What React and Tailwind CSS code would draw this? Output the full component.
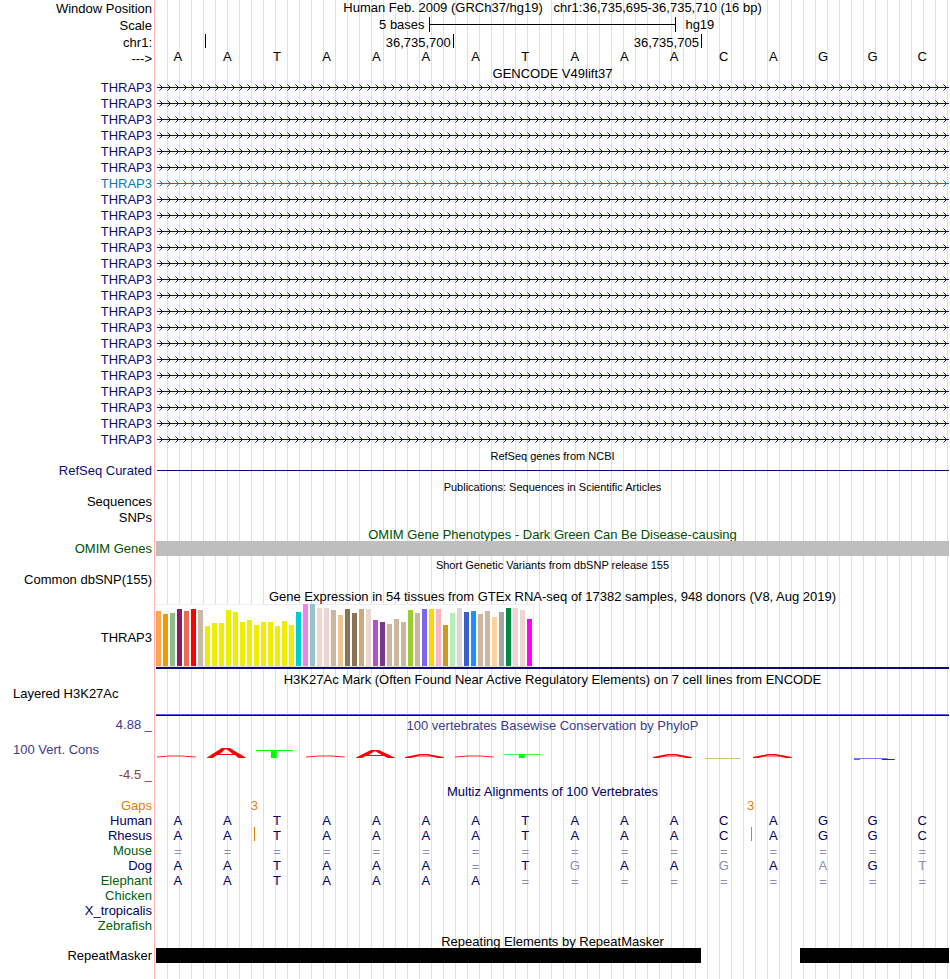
import React from "react";

const TRACK_BG =
  "bg-[linear-gradient(to_right,transparent_11px,#dcdcff_11px)] bg-[length:12px_100%]";

function Row({ label, labelClass = "text-black leading-4", height = "h-4", children }) {
  return (
    <div className={`flex ${height}`}>
      <div
        className={`w-[155px] shrink-0 border-r border-[#ffb4b4] pr-[2px] text-right text-[13px] ${labelClass}`}
      >
        {label}
      </div>
      <div className={`ml-px min-w-0 flex-1 ${TRACK_BG}`}>{children}</div>
    </div>
  );
}

function Title({ children, small = false, color = "text-black", leading = "leading-[17px]" }) {
  return (
    <h2 className={`text-center ${small ? "text-[11px]" : "text-[13px]"} ${leading} ${color}`}>
      {children}
    </h2>
  );
}

function Bases({ sequence, faint = "", color = "text-[#000064]", leading = "leading-[15px]" }) {
  return (
    <div className="-ml-[3px] mr-[2px] grid grid-cols-16 text-center text-[13px]">
      {sequence.split("").map((base, i) => (
        <span
          key={i}
          className={
            base === "="
              ? "text-[#8c8cb8] leading-[17px]"
              : `${leading} ${faint[i] === "x" ? "text-[#8c8cb8]" : color}`
          }
        >
          {base}
        </span>
      ))}
    </div>
  );
}

function GeneModel({ id, color }) {
  return (
    <svg className="block h-4 w-full" shapeRendering="crispEdges" aria-hidden="true">
      <defs>
        <pattern id={id} x="1" y="0" width="8" height="16" patternUnits="userSpaceOnUse">
          <g fill={color}>
            <rect x="0" y="7" width="8" height="1" />
            <rect x="4" y="6" width="1" height="1" />
            <rect x="4" y="8" width="1" height="1" />
            <rect x="3" y="5" width="1" height="1" />
            <rect x="3" y="9" width="1" height="1" />
            <rect x="2" y="4" width="1" height="1" opacity="0.5" />
            <rect x="2" y="10" width="1" height="1" opacity="0.5" />
          </g>
        </pattern>
      </defs>
      <rect x="1" y="0" width="100%" height="16" fill={`url(#${id})`} />
    </svg>
  );
}

const TISSUES = [
  [55, "#ffa54f"], [52, "#ee9a00"], [53, "#8fbc8f"], [57, "#8b1c62"], [55, "#ee6a50"],
  [57, "#ff0000"], [56, "#cdb79e"], [40, "#eeee00"], [43, "#eeee00"], [43, "#eeee00"],
  [56, "#eeee00"], [54, "#eeee00"], [44, "#eeee00"], [46, "#eeee00"], [41, "#eeee00"],
  [44, "#eeee00"], [44, "#eeee00"], [40, "#eeee00"], [45, "#eeee00"], [41, "#eeee00"],
  [54, "#00cdcd"], [62, "#ee82ee"], [62, "#9ac0cd"], [58, "#eed5d2"], [58, "#eed5d2"],
  [56, "#cdb79e"], [51, "#eec591"], [57, "#8b7355"], [53, "#8b7355"], [57, "#cdaa7d"],
  [57, "#eed5d2"], [46, "#b452cd"], [44, "#7a378b"], [42, "#cdb79e"], [47, "#cdb79e"],
  [44, "#cdb79e"], [56, "#9acd32"], [53, "#cdb79e"], [57, "#7a67ee"], [57, "#ffd700"],
  [57, "#ffb6c1"], [41, "#cd9b1d"], [53, "#b4eeb4"], [58, "#d9d9d9"], [54, "#3a5fcd"],
  [55, "#1e90ff"], [52, "#cdb79e"], [55, "#cdb79e"], [49, "#ffd39b"], [54, "#a6a6a6"],
  [58, "#008b45"], [58, "#eed5d2"], [56, "#eed5d2"], [47, "#ff00ff"],
];

const PEAK_FLAT = (
  <path
    d="M4 24.4 V23.6 L17 22.4 H29 L43 23.6 V24.4 L29 23.5 H17Z"
    fill="#ff0000"
    opacity="0.85"
  />
);
const PEAK_LOW = (
  <g fill="#ff0000">
    <path d="M4 25 V24 L19 21 H27 L43 24 V25 H37 L27 22.4 H19 L10 25Z" />
    <rect x="14" y="23" width="19" height="1" opacity="0.45" />
  </g>
);

const CONSERVATION = [
  PEAK_FLAT,
  <path key="1" fillRule="evenodd" fill="#ff0000" d="M4 25 V24.4 L19 15 H27 L43 24.4 V25 H36 L32 22 H14 L10 25Z M17 21 H30 L24 16.5 H22Z" />,
  <g key="2" fill="#00ff00">
    <rect x="4" y="17" width="37" height="1" />
    <rect x="19" y="17" width="6" height="8" />
  </g>,
  PEAK_FLAT,
  <path key="4" fillRule="evenodd" fill="#ff0000" d="M4 25 V24.4 L19 17 H27 L43 24.4 V25 H36 L32 23 H14 L10 25Z M17 22 H30 L24 18.5 H22Z" />,
  PEAK_LOW,
  PEAK_FLAT,
  <g key="7" fill="#00ff00">
    <rect x="4" y="21" width="37" height="1" opacity="0.7" />
    <rect x="19" y="21" width="6" height="4" />
  </g>,
  null,
  null,
  PEAK_LOW,
  <rect key="11" x="6" y="25" width="36" height="1" fill="#b4aa3c" opacity="0.7" />,
  PEAK_LOW,
  null,
  <g key="14" fill="#1e1eff">
    <rect x="6" y="25" width="34" height="1" opacity="0.6" />
    <rect x="6" y="26" width="6" height="1" opacity="0.7" />
    <rect x="34" y="26" width="13" height="1" />
  </g>,
  null,
];

const NAVY = "text-[#0c0c78] leading-4";
const SPECIES_BLUE = "text-[#000064] leading-[15px]";
const SPECIES_GREEN = "text-[#005f0a] leading-[15px]";

export default function App() {
  return (
    <main className="w-full bg-white pr-px font-['Liberation_Sans',Arial,sans-serif] text-black">
      <Row label="Window Position" height="h-[17px]" labelClass="leading-[17px]">
        <h1 className="whitespace-pre text-center text-[13px] leading-[15px]">
          {"Human Feb. 2009 (GRCh37/hg19)   chr1:36,735,695-36,735,710 (16 bp)"}
        </h1>
      </Row>
      <Row label="Scale" height="h-[17px]" labelClass="leading-[17px]">
        <div className="flex text-[13px] leading-4">
          <span className="flex-1 pr-1 pl-[5px] text-right">5 bases</span>
          <div className="flex h-[15px] w-[31.25%] items-center border-x border-black">
            <div className="h-px w-full bg-black" />
          </div>
          <span className="flex-1 pl-[9px]">hg19</span>
        </div>
      </Row>
      <Row label="chr1:" labelClass="leading-[17px]">
        <div className="-ml-px grid grid-cols-16 grid-rows-[14px] text-right text-[13px] leading-[17px]">
          <span className="col-span-5 col-start-2 border-l border-black pr-[2px]">36,735,700</span>
          <span className="col-span-5 border-l border-black pr-[2px]">36,735,705</span>
          <span className="border-l border-black" />
        </div>
      </Row>
      <Row label="--->" labelClass="leading-[17px]">
        <Bases sequence="AATAAAATAAACAGGC" color="text-black" leading="leading-[14px]" />
      </Row>
      <Row height="h-[14px]">
        <Title leading="leading-4">GENCODE V49lift37</Title>
      </Row>
      {Array.from({ length: 23 }, (_, i) => (
        <Row key={i} label="THRAP3" labelClass={i === 6 ? "text-[#0c78b4] leading-4" : NAVY}>
          <GeneModel id={`transcript-${i}`} color={i === 6 ? "#0c78b4" : "#0c0c78"} />
        </Row>
      ))}

      <Row height="h-[15px]">
        <Title small>RefSeq genes from NCBI</Title>
      </Row>
      <Row label="RefSeq Curated" labelClass={NAVY}>
        <div className="pl-px pt-[7px]">
          <div className="h-px bg-[#0c0c78]" />
        </div>
      </Row>
      <Row height="h-[15px]">
        <Title small>Publications: Sequences in Scientific Articles</Title>
      </Row>
      <Row label="Sequences" />
      <Row label="SNPs" />
      <Row height="h-[15px]">
        <Title color="text-[#005000]">
          OMIM Gene Phenotypes - Dark Green Can Be Disease-causing
        </Title>
      </Row>
      <Row label="OMIM Genes" labelClass="text-[#005000] leading-4">
        <div className="h-[15px] bg-[#bebebe]" />
      </Row>
      <Row height="h-[15px]">
        <Title small>Short Genetic Variants from dbSNP release 155</Title>
      </Row>
      <Row label="Common dbSNP(155)" />

      <Row height="h-[15px]">
        <Title>
          Gene Expression in 54 tissues from GTEx RNA-seq of 17382 samples, 948 donors (V8, Aug 2019)
        </Title>
      </Row>
      <Row
        label="THRAP3"
        height="h-[68px]"
        labelClass="flex items-center justify-end pt-[2px] leading-4"
      >
        <div className="pt-px">
          <div className="flex h-[63px] w-[378px] items-end gap-[2px] border-b border-[#dcdcdc] bg-white shadow-[inset_0_1px_#eeeeee,inset_-1px_0_#eeeeee]">
            {TISSUES.map(([height, color], i) => (
              <div key={i} className="w-[5px]" style={{ height, backgroundColor: color }} />
            ))}
          </div>
          <div className="h-[2px] bg-[#0c0c78]" />
        </div>
      </Row>

      <Row>
        <Title>
          H3K27Ac Mark (Often Found Near Active Regulatory Elements) on 7 cell lines from ENCODE
        </Title>
      </Row>
      <Row
        label={<p className="pl-[13px] text-left">Layered H3K27Ac</p>}
        height="h-[30px]"
        labelClass="leading-[14px]"
      >
        <div className="pt-[27px]">
          <div className="h-[2px] border-t border-[#5a5aff] bg-[#000078]" />
        </div>
      </Row>

      <Row label="4.88 _" labelClass="text-[#3c3c8c] leading-4">
        <Title color="text-[#3c3c8c]">100 vertebrates Basewise Conservation by PhyloP</Title>
      </Row>
      <Row
        height="h-[51px]"
        labelClass="flex flex-col justify-between pt-[9px] pb-px leading-4"
        label={
          <>
            <p className="pl-[13px] text-left text-[#3c3c8c]">100 Vert. Cons</p>
            <p className="text-[#8c3c3c]">-4.5 _</p>
          </>
        }
      >
        <div className="-ml-[3px] mr-[2px] grid grid-cols-16">
          {CONSERVATION.map((shape, i) => (
            <svg
              key={i}
              className="block h-[51px] w-full"
              viewBox="0 0 50 51"
              preserveAspectRatio="none"
              aria-hidden="true"
            >
              {shape}
            </svg>
          ))}
        </div>
      </Row>

      <Row height="h-[14px]">
        <Title color="text-[#000064]" leading="leading-[15px]">
          Multiz Alignments of 100 Vertebrates
        </Title>
      </Row>
      <Row label="Gaps" height="h-[15px]" labelClass="text-[#e08200] leading-[15px]">
        <div className="-ml-px grid grid-cols-16 text-center text-[13px] leading-[15px] text-[#e08200]">
          <span className="col-span-2 col-start-2">3</span>
          <span className="col-span-2 col-start-12">3</span>
        </div>
      </Row>
      <Row label="Human" height="h-[15px]" labelClass={SPECIES_BLUE}>
        <Bases sequence="AATAAAATAAACAGGC" />
      </Row>
      <Row label="Rhesus" height="h-[15px]" labelClass={SPECIES_BLUE}>
        <div className="grid">
          <div className="col-start-1 row-start-1">
            <Bases sequence="AATAAAATAAACAGGC" />
          </div>
          <div className="col-start-1 row-start-1 -ml-px -mt-px grid h-[14px] grid-cols-16">
            <span className="col-start-3 border-l border-[#e08200]" />
            <span className="col-start-13 border-l border-[#e08200]" />
          </div>
        </div>
      </Row>
      <Row label="Mouse" height="h-[15px]" labelClass={SPECIES_GREEN}>
        <Bases sequence="================" />
      </Row>
      <Row label="Dog" height="h-[15px]" labelClass={SPECIES_BLUE}>
        <Bases sequence="AATAAA=TGAAGAAGT" faint="        x  x x x" />
      </Row>
      <Row label="Elephant" height="h-[15px]" labelClass={SPECIES_GREEN}>
        <Bases sequence="AATAAAA=========" />
      </Row>
      <Row label="Chicken" height="h-[15px]" labelClass={SPECIES_GREEN} />
      <Row label="X_tropicalis" height="h-[15px]" labelClass={SPECIES_BLUE} />
      <Row label="Zebrafish" height="h-[15px]" labelClass={SPECIES_GREEN} />

      <Row height="h-[15px]">
        <Title>Repeating Elements by RepeatMasker</Title>
      </Row>
      <Row label="RepeatMasker" height="h-[15px]" labelClass="leading-[15px]">
        <div className="flex h-[15px]">
          <div className="flex-[545] bg-black" />
          <div className="flex-[99]" />
          <div className="flex-[149] bg-black" />
        </div>
      </Row>
      <Row />
    </main>
  );
}
